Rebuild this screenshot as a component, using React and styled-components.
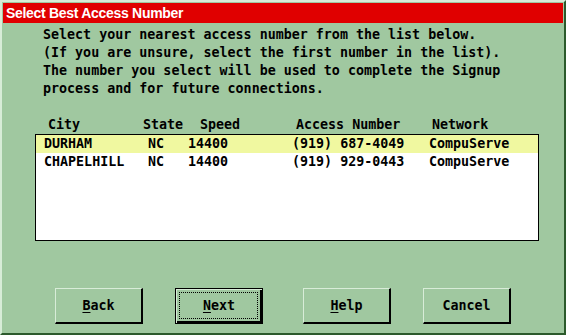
import React from "react";
import styled, { createGlobalStyle } from "styled-components";

const Global = createGlobalStyle`
  html, body { margin: 0; padding: 0; background: #a0c8a0; }
  #root { width: 566px; height: 335px; }
`;

const Window = styled.div`
  box-sizing: border-box;
  width: 566px;
  height: 335px;
  padding: 1px;
  background: #a0c8a0;
  border-style: solid;
  border-width: 2px;
  border-color: #d8ecd8 #2c5a2c #2c5a2c #d8ecd8;
  display: flex;
  flex-direction: column;
  font-family: "DejaVu Sans Mono", "Liberation Mono", monospace;
  font-weight: bold;
  font-size: 13.33px;
  color: #000;
`;

const TitleBar = styled.div`
  height: 20px;
  line-height: 20px;
  background: #e00000;
  color: #fff;
  padding-left: 3px;
  font-family: "Liberation Sans", Arial, sans-serif;
  font-weight: bold;
  font-size: 14px;
  letter-spacing: -0.3px;
  white-space: nowrap;
`;

const Intro = styled.p`
  margin: 3px 0 0 40px;
  line-height: 18px;
  white-space: pre;
`;

const Columns = styled.div`
  display: grid;
  grid-template-columns: ${(p) => p.$cols};
  padding-left: ${(p) => p.$pad}px;
  height: 18px;
  line-height: 18px;
  white-space: pre;
  background: ${(p) => (p.$selected ? "#f0f8a0" : "transparent")};
`;

const Header = styled(Columns)`
  margin: 18px 0 0 32px;
  width: 504px;
`;

const ListBox = styled.div`
  box-sizing: border-box;
  margin-left: 32px;
  width: 504px;
  height: 107px;
  background: #fff;
  border: 1px solid #000;
`;

const ButtonRow = styled.div`
  display: flex;
  gap: 32px;
  margin: 47px 0 0 52px;
`;

const Button = styled.div`
  box-sizing: border-box;
  width: 88px;
  height: 36px;
  margin-left: ${(p) => (p.$spaced ? 8 : 0)}px;
  display: flex;
  align-items: center;
  justify-content: center;
  position: relative;
  background: #a0c8a0;
  border-style: solid;
  border-width: ${(p) => (p.$default ? "1px" : "1px 2px 2px 1px")};
  border-color: ${(p) => (p.$default ? "#000" : "#d8ecd8 #000 #000 #d8ecd8")};
  box-shadow: ${(p) =>
    p.$default ? "inset 1px 1px 0 #d8ecd8, inset -2px -2px 0 #000" : "none"};
`;

const Focus = styled.span`
  position: absolute;
  left: 3px;
  top: 3px;
  right: 4px;
  bottom: 4px;
  border: 1px dotted #000;
  pointer-events: none;
`;

const Label = styled.span`
  position: relative;
  line-height: 18px;
`;

const Key = styled.u`
  text-decoration: underline;
  text-underline-offset: 2px;
  text-decoration-thickness: 1px;
`;

const headerCols = "95px 57px 96px 136px 1fr";
const rowCols = "104px 40px 104px 137px 1fr";

const rows = [
  ["DURHAM", "NC", "14400", "(919) 687-4049", "CompuServe"],
  ["CHAPELHILL", "NC", "14400", "(919) 929-0443", "CompuServe"],
];

export default function App() {
  return (
    <>
      <Global />
      <Window>
        <TitleBar>Select Best Access Number</TitleBar>
        <Intro>
          {"Select your nearest access number from the list below.\n(If you are unsure, select the first number in the list).\nThe number you select will be used to complete the Signup\nprocess and for future connections."}
        </Intro>
        <Header $cols={headerCols} $pad={13}>
          <span>City</span>
          <span>State</span>
          <span>Speed</span>
          <span>Access Number</span>
          <span>Network</span>
        </Header>
        <ListBox>
          {rows.map((r, i) => (
            <Columns key={i} $cols={rowCols} $pad={8} $selected={i === 0}>
              {r.map((c, j) => (
                <span key={j}>{c}</span>
              ))}
            </Columns>
          ))}
        </ListBox>
        <ButtonRow>
          <Button>
            <Label>
              <Key>B</Key>ack
            </Label>
          </Button>
          <Button $default>
            <Focus />
            <Label>
              <Key>N</Key>ext
            </Label>
          </Button>
          <Button $spaced>
            <Label>
              <Key>H</Key>elp
            </Label>
          </Button>
          <Button>
            <Label>Cancel</Label>
          </Button>
        </ButtonRow>
      </Window>
    </>
  );
}
